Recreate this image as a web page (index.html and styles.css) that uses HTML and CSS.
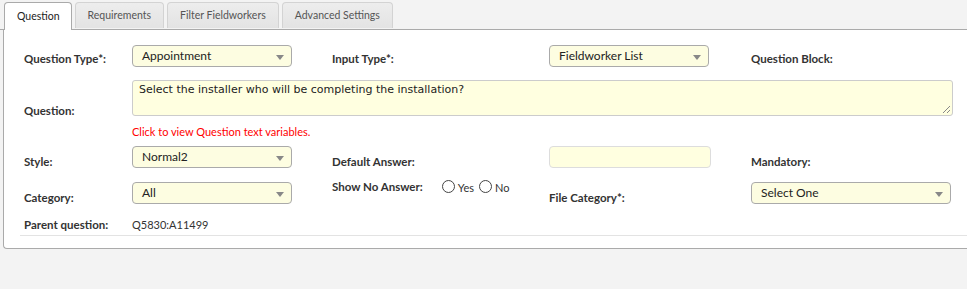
FILE: index.html
```
<!DOCTYPE html>
<html>
<head>
<meta charset="utf-8">
<link rel="stylesheet" href="styles.css">
</head>
<body>
<div class="tabs">
  <div class="tab active">Question</div>
  <div class="tab">Requirements</div>
  <div class="tab">Filter Fieldworkers</div>
  <div class="tab">Advanced Settings</div>
  <div class="tab-fill"></div>
</div>
<div class="panel">
  <div class="form">
    <div class="lbl r1">Question Type*:</div>
    <div class="fld r1"><div class="select"><span>Appointment</span><i class="arrow"></i></div></div>
    <div class="lbl r1">Input Type*:</div>
    <div class="fld r1"><div class="select"><span>Fieldworker List</span><i class="arrow"></i></div></div>
    <div class="lbl r1 last">Question Block:</div>

    <div class="lbl r2 qlabel">Question:</div>
    <div class="fld r2 span4">
      <div class="textarea">Select the installer who will be completing the installation?<svg class="grip" width="9" height="9" viewBox="0 0 9 9"><path d="M8 1L1 8M8 5L5 8" stroke="#888" stroke-width="1"/></svg></div>
    </div>

    <div class="link span4">Click to view Question text variables.</div>

    <div class="lbl r3">Style:</div>
    <div class="fld r3"><div class="select"><span>Normal2</span><i class="arrow"></i></div></div>
    <div class="lbl r3">Default Answer:</div>
    <div class="fld r3"><div class="input"></div></div>
    <div class="lbl r3 last">Mandatory:</div>

    <div class="lbl r4">Category:</div>
    <div class="fld r4"><div class="select"><span>All</span><i class="arrow"></i></div></div>
    <div class="lbl r4 top">Show No Answer:<span class="radios"><span class="radio"></span><span class="rtxt">Yes</span><span class="radio"></span><span class="rtxt">No</span></span></div>
    <div class="lbl r4">File Category*:</div>
    <div class="fld r4"><div class="select wide"><span>Select One</span><i class="arrow"></i></div></div>

    <div class="lbl r5">Parent question:</div>
    <div class="val r5 span4">Q5830:A11499</div>
  </div>
  <div class="sep"></div>
</div>
</body>
</html>
```
FILE: styles.css
```
html, body {
  margin: 0;
  padding: 0;
  background: #f3f3f3;
  font-family: Lato, "Open Sans", sans-serif;
  color: #333;
}
.tabs {
  display: flex;
  align-items: flex-end;
  height: 30px;
  padding-left: 4px;
  box-sizing: border-box;
  gap: 3px;
  border-bottom: 1px solid #aaa;
}
.tab {
  height: 26px;
  box-sizing: border-box;
  border: 1px solid #d3d3d3;
  border-bottom: none;
  border-radius: 4px 4px 0 0;
  background: linear-gradient(#ededed, #e3e3e3);
  color: #555;
  font-size: 10.5px;
  line-height: 25px;
  padding: 0 12px;
  margin-bottom: 1px;
  white-space: nowrap;
}
.tab.active {
  background: #fff;
  border-color: #aaa;
  color: #222;
  height: 28px;
  margin-bottom: -1px;
  line-height: 27px;
  padding: 0 11px 0 12px;
  position: relative;
  z-index: 2;
}
.tab-fill {
  flex: 1;
}
.panel {
  background: #fff;
  margin-left: 3px;
  border-left: 1px solid #aaa;
  border-bottom: 1px solid #aaa;
  border-bottom-left-radius: 4px;
  padding: 15px 0 12px 20px;
}
.form {
  display: grid;
  grid-template-columns: 108px 200px 217px 202px 1fr;
  grid-template-rows: 22px 49px 18px 34px 36px 27px;
}
.lbl {
  font-weight: 700;
  font-size: 11.5px;
  color: #333;
  white-space: nowrap;
  display: flex;
  align-items: center;
  padding-top: 5px;
}
.r1 { grid-row: 1; }
.r2 { grid-row: 2; align-self: end; }
.link { grid-row: 3; }
.r3 { grid-row: 4; align-self: end; }
.r4 { grid-row: 5; align-self: end; }
.r5 { grid-row: 6; }
.span4 { grid-column: 2 / span 4; }
.lbl.qlabel {
  align-self: end;
  padding-top: 0;
  margin-bottom: -1px;
}
.r2.span4 { padding-right: 14px; }
.fld { display: flex; align-items: center; padding-top: 0; }
.select {
  position: relative;
  width: 160px;
  height: 22px;
  box-sizing: border-box;
  border: 1px solid #aaa;
  border-radius: 4px;
  background: #fdfde1;
  font-size: 12px;
  color: #222;
  padding-left: 9px;
  line-height: 19px;
}
.select.wide { width: 200px; }
.arrow {
  position: absolute;
  right: 7px;
  top: 9px;
  width: 0;
  height: 0;
  border-left: 4px solid transparent;
  border-right: 4px solid transparent;
  border-top: 5px solid #888;
}
.textarea {
  position: relative;
  width: 821px;
  height: 36px;
  box-sizing: border-box;
  border: 1px solid #ccc;
  border-radius: 3px;
  background: #ffffe0;
  font-family: "DejaVu Sans", Verdana, sans-serif;
  font-size: 11px;
  color: #222;
  padding: 2px 6px;
  line-height: 14px;
}
.grip {
  position: absolute;
  right: 1px;
  bottom: 1px;
}
.input {
  width: 162px;
  height: 22px;
  box-sizing: border-box;
  border: 1px solid #ddd;
  border-radius: 4px;
  background: #ffffe0;
}
.link {
  font-size: 11px;
  color: #f00;
  padding-top: 9px;
}
.lbl.top {
  align-self: start;
  padding-top: 0;
  margin-top: 10px;
  align-items: center;
}
.radios {
  display: inline-flex;
  align-items: center;
  margin-left: 19px;
  font-weight: 400;
}
.radio {
  width: 11px;
  height: 11px;
  border: 1px solid #444;
  border-radius: 50%;
  background: #fff;
  margin-right: 3px;
}
.rtxt {
  font-size: 11px;
  color: #333;
  margin-right: 5px;
  padding-top: 3px;
}
.val {
  font-size: 11px;
  color: #333;
  display: flex;
  align-items: center;
  padding-top: 5px;
}
.r5.lbl, .r5.val { align-self: end; height: 14px; }
.sep {
  height: 1px;
  background: #e3e3e3;
  margin-left: -4px;
  margin-top: 4px;
}
```
